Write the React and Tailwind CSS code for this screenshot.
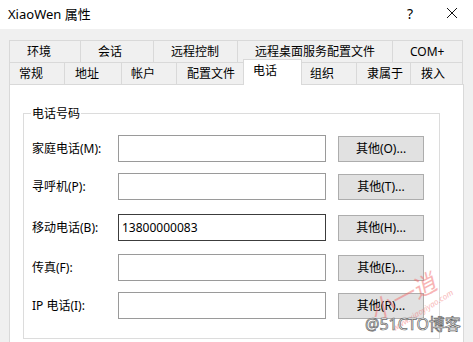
import React from "react";

const row1 = [
  ["环境", "w-[71px]"],
  ["会话", "w-[73px]"],
  ["远程控制", "w-[84px]"],
  ["远程桌面服务配置文件", "w-[155px]"],
  ["COM+", "w-[71px]"],
];

const rows = [
  { label: "家庭电话(M):", btn: "其他(O)...", mt: "mt-[13px]" },
  { label: "寻呼机(P):", btn: "其他(T)...", mt: "mt-[11px]" },
  { label: "移动电话(B):", btn: "其他(H)...", mt: "mt-[14px]", value: "13800000083", dark: true },
  { label: "传真(F):", btn: "其他(E)...", mt: "mt-[13px]" },
  { label: "IP 电话(I):", btn: "其他(R)...", mt: "mt-[11px]" },
];

export default function App() {
  return (
    <div className="w-[473px] h-[342px] overflow-hidden bg-[#f0f0f0] text-[12px] text-black font-['Noto_Sans','Noto_Sans_CJK_SC',sans-serif] relative">
      {/* title bar */}
      <div className="h-[29px] bg-white flex items-center pl-[8px]">
        <span className="text-[13px] leading-none">XiaoWen 属性</span>
        <span className="ml-auto text-[14px] leading-none mr-[33px] mt-[-2px]">?</span>
        <svg width="12" height="12" viewBox="0 0 12 12" className="mr-[15px] mt-[-3px]">
          <path d="M1 1 L11 11 M11 1 L1 11" stroke="#111" strokeWidth="1" fill="none" />
        </svg>
      </div>

      <div className="pl-[9px] pt-[11px]">
        {/* tab row 1 */}
        <div className="flex h-[22px]">
          {row1.map(([t, w], i) => (
            <div
              key={t}
              className={`${w} h-[22px] border-t border-l border-[#d9d9d9] ${i === row1.length - 1 ? "border-r" : ""} flex items-center pl-[17px] leading-none`}
            >
              {t}
            </div>
          ))}
        </div>
        {/* tab row 2 */}
        <div className="flex h-[22px] items-start">
          <div className="w-[55px] h-[22px] border-t border-l border-[#d9d9d9] flex items-center pl-[9px] leading-none">常规</div>
          <div className="w-[57px] h-[22px] border-t border-l border-[#d9d9d9] flex items-center pl-[10px] leading-none">地址</div>
          <div className="w-[55px] h-[22px] border-t border-l border-[#d9d9d9] flex items-center pl-[9px] leading-none">帐户</div>
          <div className="w-[67px] h-[22px] border-t border-l border-[#d9d9d9] flex items-center pl-[10px] leading-none">配置文件</div>
          <div className="relative z-10 -mt-[3px] w-[59px] h-[26px] bg-white border-t border-l border-r border-[#d9d9d9] flex items-start pt-[5px] pl-[9px] leading-none">电话</div>
          <div className="w-[54px] h-[22px] border-t border-[#d9d9d9] flex items-center pl-[8px] leading-none">组织</div>
          <div className="w-[54px] h-[22px] border-t border-l border-[#d9d9d9] flex items-center pl-[10px] leading-none">隶属于</div>
          <div className="w-[53px] h-[22px] border-t border-l border-r border-[#d9d9d9] flex items-center pl-[10px] leading-none">拨入</div>
        </div>

        {/* panel */}
        <div className="w-[455px] h-[280px] bg-white border border-[#d9d9d9] pl-[13px] pt-[20px]">
          <fieldset className="w-[417px] h-[234px] border border-[#dcdcdc]">
            <legend className="ml-[7px] px-[1px] leading-[17px]">电话号码</legend>
            {rows.map((r) => (
              <div key={r.label} className={`flex items-center h-[27px] ${r.mt}`}>
                <div className="w-[94px] pl-[8px] leading-none">{r.label}</div>
                <div
                  className={`w-[208px] h-[27px] border ${r.dark ? "border-[#3c3c3c]" : "border-[#9a9a9a]"} bg-white flex items-center pl-[3px] leading-none`}
                >
                  {r.value || ""}
                </div>
                <div className="ml-[12px] w-[86px] h-[26px] bg-[#e1e1e1] border border-[#adadad] flex items-center justify-center leading-none">
                  {r.btn}
                </div>
              </div>
            ))}
          </fieldset>
        </div>
      </div>

      {/* watermark */}
      <div className="absolute left-[366px] top-[284px] rotate-[-28deg] text-[24px] leading-none text-[#f26d6d] opacity-50 font-['Noto_Sans_CJK_SC',sans-serif] italic pointer-events-none">
        小一逍
      </div>
      <div className="absolute left-[388px] top-[306px] rotate-[-32deg] text-[8px] leading-none text-[#f26d6d] opacity-50 italic pointer-events-none">
        www.xiaoyiyao.com
      </div>
      <div className="absolute left-[365px] top-[314px] text-[16px] leading-[20px] text-white [-webkit-text-stroke:0.7px_#666] font-['Noto_Sans','Noto_Sans_CJK_SC',sans-serif]">
        @51CTO博客
      </div>
    </div>
  );
}
